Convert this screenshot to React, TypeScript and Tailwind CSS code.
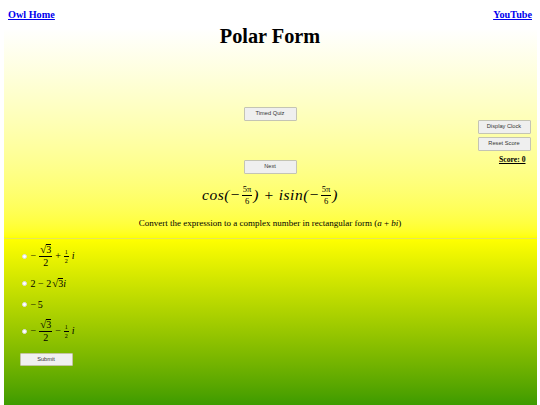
import React from 'react'

const serif = 'font-["Liberation_Serif",serif]'

function QuizButton({ label, className = '' }: { label: string; className?: string }) {
  return (
    <button
      className={`h-[14px] w-[53px] rounded-[1px] border border-[#c4c4b4] bg-[#efefef] font-["Liberation_Sans",sans-serif] text-[5.7px] leading-none text-[#333] ${className}`}
    >
      {label}
    </button>
  )
}

function Frac({ top, bottom, size = 'text-[7px]' }: { top: React.ReactNode; bottom: React.ReactNode; size?: string }) {
  return (
    <span className={`mx-[1px] inline-flex flex-col items-center align-middle leading-none ${size}`}>
      <span className="border-b border-black px-[1px] pb-[1px]">{top}</span>
      <span className="pt-[1px]">{bottom}</span>
    </span>
  )
}

function Sqrt3() {
  return (
    <span className="inline-flex items-end">
      <span className="text-[11px] leading-none">√</span>
      <span className="border-t border-black text-[10px] leading-none">3</span>
    </span>
  )
}

function Option({ children, className = '' }: { children: React.ReactNode; className?: string }) {
  return (
    <label className={`flex items-center gap-[4px] ${className}`}>
      <span className="h-[5px] w-[5px] rounded-full border border-[#ddd] bg-white" />
      <span className="flex items-center gap-[2px] text-[10px] leading-none text-black">{children}</span>
    </label>
  )
}

export default function App() {
  return (
    <div className={`relative h-[405px] w-[540px] overflow-hidden bg-white ${serif}`}>
      <div className="absolute inset-x-0 top-0 z-10 flex justify-between px-[8px] pt-[8px] text-[10.2px] leading-[13px] font-bold text-[#0000ee] underline">
        <a href="#">Owl Home</a>
        <a href="#">YouTube</a>
      </div>

      <div className="mx-[3.5px] h-[405px] pt-[28px]">
        <section className="relative h-[211px] border-b border-[#e6e65a] bg-gradient-to-b from-white to-[#ffff00]">
          <h1 className="absolute inset-x-0 top-[-4px] text-center text-[20.3px] leading-[25px] font-bold text-black">
            Polar Form
          </h1>

          <div className="flex flex-col items-center pt-[79px]">
            <QuizButton label="Timed Quiz" />
            <QuizButton label="Next" className="mt-[39px]" />
            <div className="mt-[9px] flex h-[24px] items-center text-[15.5px] tracking-[0.5px] text-black italic">
              <span>cos(−</span>
              <Frac top="5π" bottom="6" size="text-[8.5px] not-italic tracking-normal" />
              <span>)&nbsp;+&nbsp;isin(−</span>
              <Frac top="5π" bottom="6" size="text-[8.5px] not-italic tracking-normal" />
              <span>)</span>
            </div>
            <p className="mt-[10px] text-[9px] leading-[12px] text-black">
              Convert the expression to a complex number in rectangular form (<i>a</i> + <i>bi</i>)
            </p>
          </div>

          <div className="absolute top-[92px] right-[6px] flex flex-col items-end gap-[3px]">
            <QuizButton label="Display Clock" />
            <QuizButton label="Reset Score" />
            <span className="mt-[1px] mr-[5px] text-[7.7px] leading-[10px] font-bold text-black underline">Score: 0</span>
          </div>
        </section>

        <section className="h-[166px] bg-gradient-to-b from-[#ffff00] to-[#3d9b00] pl-[18px]">
          <Option className="h-[18px] translate-y-[8px]">
            <span>−</span>
            <Frac top={<Sqrt3 />} bottom="2" size="text-[10px]" />
            <span>+</span>
            <Frac top="1" bottom="2" size="text-[6px]" />
            <i>i</i>
          </Option>
          <Option className="mt-[22px] h-[9px]">
            <span>2 − 2</span>
            <span className="ml-[-1px] flex items-center"><Sqrt3 /><i>i</i></span>
          </Option>
          <Option className="mt-[12px] h-[9px]">
            <span className="tracking-[1.5px]">−5</span>
          </Option>
          <Option className="mt-[13px] h-[18px]">
            <span>−</span>
            <Frac top={<Sqrt3 />} bottom="2" size="text-[10px]" />
            <span>−</span>
            <Frac top="1" bottom="2" size="text-[6px]" />
            <i>i</i>
          </Option>
          <button className="mt-[13px] ml-[-2px] h-[13px] w-[53px] rounded-[1px] border border-[#c4c4a4] bg-[#f0f0f0] font-['Liberation_Sans',sans-serif] text-[5.7px] leading-none text-[#333]">
            Submit
          </button>
        </section>
      </div>
    </div>
  )
}
